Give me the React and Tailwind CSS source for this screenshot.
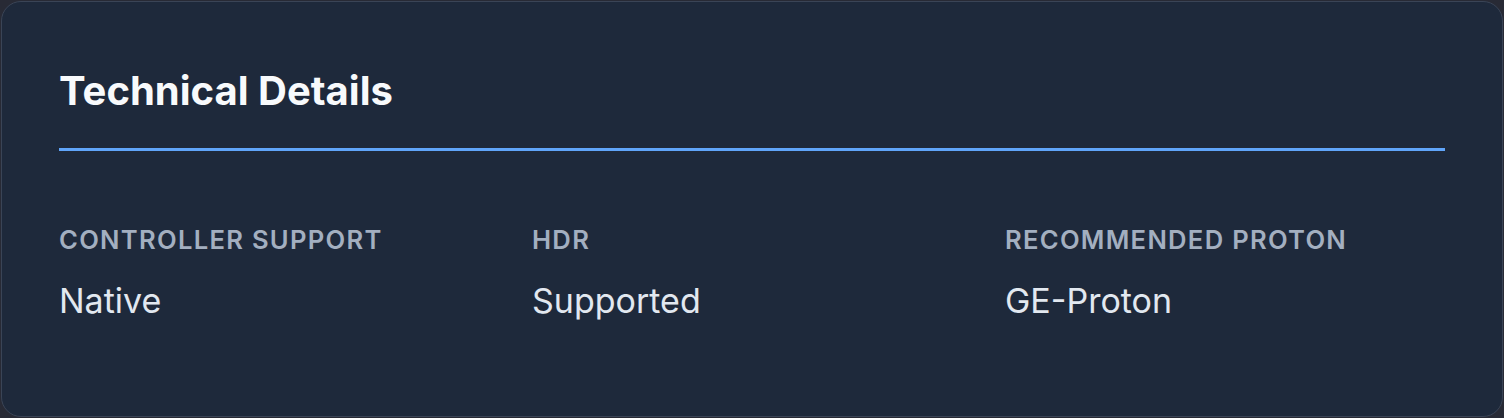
const details = [
  { label: "Controller Support", value: "Native" },
  { label: "HDR", value: "Supported" },
  { label: "Recommended Proton", value: "GE-Proton" },
];

const TechnicalDetails = () => {
  return (
    <section className="h-[416px] rounded-[20px] border border-[#3a4456] bg-[#1e293b] px-[57px] pt-[69px]">
      <h2 className="border-b-[3px] border-[#60a5fa] pb-[37px] text-[40px] font-bold leading-[40px] text-[#f8fafc]">
        Technical Details
      </h2>
      <div className="grid grid-cols-3 gap-x-[33px] pt-[74px]">
        {details.map((item) => (
          <div key={item.label} className="flex flex-col">
            <span className="text-[25.6px] font-semibold uppercase leading-[30px] tracking-wider text-[#a3afc0]">
              {item.label}
            </span>
            <span className="mt-[26px] text-[34px] leading-[40px] text-[#e2e8f0]">
              {item.value}
            </span>
          </div>
        ))}
      </div>
    </section>
  );
};

export default function App() {
  return (
    <div className="min-h-[418px] bg-[#282a35] p-px" style={{ fontFamily: "Inter, 'Noto Sans', sans-serif" }}>
      <TechnicalDetails />
    </div>
  );
}
